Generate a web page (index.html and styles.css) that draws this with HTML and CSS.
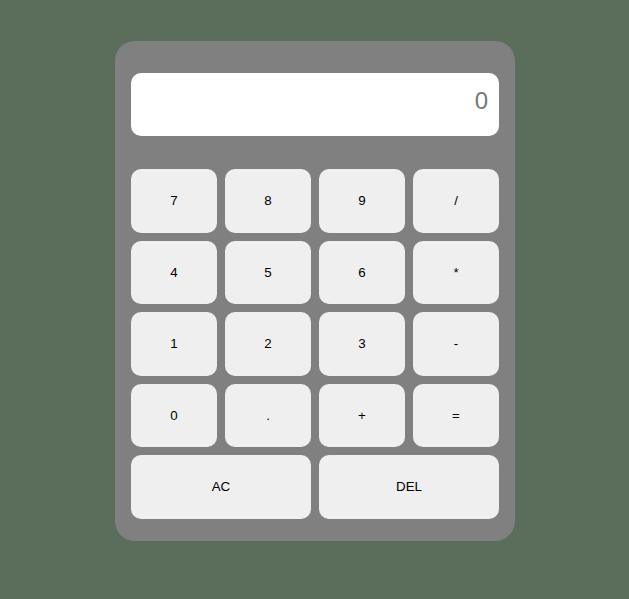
FILE: index.html
```html
<!DOCTYPE html>
<html>
<head>
<meta charset="utf-8">
<link rel="stylesheet" href="styles.css">
</head>
<body>
<div class="calculator">
  <div class="display">0</div>
  <div class="keys">
    <button class="key">7</button>
    <button class="key">8</button>
    <button class="key">9</button>
    <button class="key">/</button>
    <button class="key">4</button>
    <button class="key">5</button>
    <button class="key">6</button>
    <button class="key">*</button>
    <button class="key">1</button>
    <button class="key">2</button>
    <button class="key">3</button>
    <button class="key">-</button>
    <button class="key">0</button>
    <button class="key">.</button>
    <button class="key">+</button>
    <button class="key">=</button>
    <button class="key wide">AC</button>
    <button class="key wide">DEL</button>
  </div>
</div>
</body>
</html>
```
FILE: styles.css
```css
html, body {
  margin: 0;
  padding: 0;
}
body {
  background: #5b6e5b;
  font-family: "Liberation Sans", Arial, sans-serif;
  height: 599px;
  overflow: hidden;
}
.calculator {
  box-sizing: border-box;
  width: 400px;
  height: 500px;
  margin: 41px auto 0;
  position: relative;
  left: 0.5px;
  background: #808080;
  border-radius: 20px;
  padding: 32px 16px 22px;
}
.display {
  box-sizing: border-box;
  height: 63px;
  background: #ffffff;
  border-radius: 10px;
  padding: 14px 11px 0;
  text-align: right;
  font-size: 24px;
  line-height: 27px;
  color: #777777;
  margin-bottom: 33px;
}
.keys {
  display: grid;
  grid-template-columns: repeat(4, 1fr);
  grid-auto-rows: 63.5px;
  gap: 8px;
}
.key {
  border: none;
  background: #efefef;
  border-radius: 10px;
  font-family: "Liberation Sans", Arial, sans-serif;
  font-size: 13.333px;
  color: #000000;
  padding: 0;
  margin: 0;
}
.wide {
  grid-column: span 2;
}
```
